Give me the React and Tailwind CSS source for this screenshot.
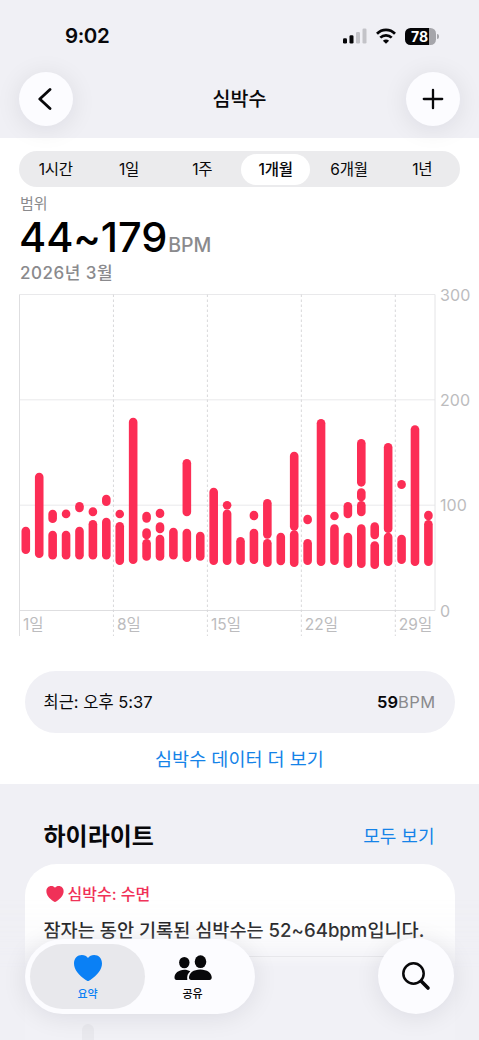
import { useState } from 'react';

const RANGES = ['1시간', '1일', '1주', '1개월', '6개월', '1년'];

// one entry per day, each segment is [low, high] in bpm
const DAYS = [
  [[53.6, 79.6]],
  [[49.8, 130.8]],
  [[83, 95.7], [48.3, 75.8]],
  [[87.5, 96], [48.3, 75.8]],
  [[93.2, 103], [48.3, 79.6]],
  [[89.4, 98], [48.3, 86]],
  [[99.2, 110], [48.3, 88]],
  [[87.5, 95.7], [43.2, 84]],
  [[44.1, 183]],
  [[83.4, 93.8], [67.6, 78], [47.3, 67.9]],
  [[87.8, 96.7], [73.3, 83.7], [47.3, 72]],
  [[48.3, 78.6]],
  [[89.4, 143.8], [46, 77.7]],
  [[47.3, 74.8]],
  [[43.2, 116.6]],
  [[96, 104], [43.2, 96]],
  [[43.2, 69.8]],
  [[85.6, 94.8], [44.1, 77.7]],
  [[68.2, 105.9], [41.3, 67.9]],
  [[42.9, 73.9]],
  [[75.8, 150.8], [41.3, 76.1]],
  [[81.8, 91], [43.2, 67.9]],
  [[42.2, 181.8]],
  [[85.6, 93.8], [43.2, 81.8]],
  [[87.5, 103], [40.3, 73.9]],
  [[117.6, 162.8], [103.6, 116], [89.4, 104], [40.3, 81.8]],
  [[67.6, 83.7], [39.4, 65.7]],
  [[73.6, 159], [42.2, 73.9]],
  [[115.3, 123.9], [44.1, 72]],
  [[42.2, 175.8]],
  [[85.6, 94.8], [42.2, 86]],
];

const LEFT = 19.5;
const RIGHT = 435;
const TOP = 14.5;
const BASE = 330.5;
const STEP = 13.42;
const BAR = 8.6;
const y = v => BASE - (v / 300) * (BASE - TOP);

function Chart() {
  return (
    <svg width="479" height="360" viewBox="0 0 479 360" className="block shrink-0">
      {[0, 100, 200, 300].map(v => (
        <g key={v}>
          <line x1={LEFT} x2={RIGHT} y1={y(v)} y2={y(v)} stroke={v === 0 ? '#dedee0' : '#e9e9eb'} />
          <text x="440" y={y(v) + 6} fontSize="16" letterSpacing="0.1" fill="#bcbcbe">{v}</text>
        </g>
      ))}
      <line x1={LEFT} x2={LEFT} y1={TOP} y2="356" stroke="#dedee0" />
      <line x1={RIGHT} x2={RIGHT} y1={TOP} y2={BASE} stroke="#e4e4e6" />
      {[1, 8, 15, 22, 29].map((d, i) => (
        <g key={d}>
          {i > 0 && (
            <line x1={LEFT + i * 93.95} x2={LEFT + i * 93.95} y1={TOP} y2="356" stroke="#d8d8da" strokeDasharray="2.5 2.5" />
          )}
          <text x={LEFT + i * 93.95 + 3.5} y="349.5" fontSize="15.5" fill="#bcbcbe">{d}일</text>
        </g>
      ))}
      {DAYS.map((segs, i) => segs.map(([lo, hi]) => (
        <rect
          key={`${i}-${lo}`}
          x={25.8 + i * STEP - BAR / 2}
          y={y(hi)}
          width={BAR}
          height={y(lo) - y(hi)}
          rx={BAR / 2}
          fill="#fc2d55"
        />
      )))}
    </svg>
  );
}

function Heart({ className }) {
  return (
    <svg viewBox="0 0 28 26" className={className} fill="currentColor">
      <path d="M14 26C13.300 26 12.300 25.300 11.400 24.700C5 20.300 0 14.800 0 8.500C0 3.400 3.400 0 7.900 0C10.500 0 12.700 1.100 14 2.900C15.300 1.100 17.500 0 20.100 0C24.600 0 28 3.400 28 8.500C28 14.800 23 20.300 16.600 24.700C15.700 25.300 14.700 26 14 26Z" />
    </svg>
  );
}

function StatusIcons() {
  return (
    <div className="flex items-center">
      <svg width="24" height="16" viewBox="0 0 24 16">
        <rect x="0" y="10.300" width="4" height="5.200" rx="1.300" fill="#050507" />
        <rect x="6.500" y="7.300" width="4" height="8.200" rx="1.300" fill="#050507" />
        <rect x="13" y="3.900" width="4" height="11.600" rx="1.300" fill="#c3c3c8" />
        <rect x="19.500" y="0.500" width="4" height="15" rx="1.300" fill="#c3c3c8" />
      </svg>
      <svg width="20" height="16" viewBox="0 0 20 16" className="ml-[9px]" fill="none" stroke="#050507" strokeWidth="2.700">
        <path d="M1 5.700C6 0.600 14 0.600 19 5.700" />
        <path d="M4.300 9.600C7.500 6.500 12.500 6.500 15.700 9.600" />
        <path d="M10 15.800L6.900 12.700C8.700 11.100 11.300 11.100 13.100 12.700Z" fill="#050507" stroke="none" />
      </svg>
      <div className="ml-[9px] flex h-[17px] w-[31px] items-center justify-center overflow-hidden rounded-[5.5px] bg-linear-to-r from-[#050507] from-78% to-[#a5a5aa] to-78%">
        <span className="pr-[2px] text-[14px] leading-[17px] font-bold text-white">78</span>
      </div>
      <div className="ml-px h-[5px] w-[2px] rounded-r-full bg-[#a5a5aa]" />
    </div>
  );
}

const glass = 'rounded-full bg-[#fcfcff] shadow-[0_3px_26px_rgba(0,0,30,0.090)]';

export default function App() {
  const [range, setRange] = useState('1개월');

  return (
    <div className="relative flex h-[1040px] w-[479px] flex-col overflow-hidden bg-white font-['Inter','Noto_Sans_CJK_KR',sans-serif] text-[#08080a]">
      <header className="relative h-[138px] shrink-0 bg-[#f0f0f5]">
        <div className="flex h-[72px] items-center justify-between pr-[40px] pl-[65px]">
          <span className="text-[20.500px] font-semibold tracking-[-0.400px]">9:02</span>
          <StatusIcons />
        </div>
        <div className="flex items-center justify-between px-[19px]">
          <button className={`flex size-[54px] items-center justify-center ${glass}`}>
            <svg width="14" height="24" viewBox="0 0 14 24" className="mr-[3px]" fill="none" stroke="currentColor" strokeWidth="2.800" strokeLinecap="round" strokeLinejoin="round">
              <path d="M12 2.500L1.800 12L12 21.500" />
            </svg>
          </button>
          <h1 className="pt-[2px] text-[19.500px] font-medium">심박수</h1>
          <button className={`flex size-[54px] items-center justify-center ${glass}`}>
            <svg width="22" height="22" viewBox="0 0 22 22" stroke="currentColor" strokeWidth="2.300" strokeLinecap="round">
              <path d="M11 1.800V20.200M1.800 11H20.200" />
            </svg>
          </button>
        </div>
      </header>

      {/* range picker */}
      <div className="mx-[19px] mt-[13px] flex h-9 shrink-0 items-center rounded-full bg-[#ebebed] pr-[1px]">
        {RANGES.map(r => (
          <button
            key={r}
            onClick={() => setRange(r)}
            className={`mx-[2.500px] h-[31px] flex-1 rounded-full pt-[2px] text-[15.500px] tracking-[-0.300px] ${r === range ? 'bg-white font-medium' : ''}`}
          >
            {r}
          </button>
        ))}
      </div>

      <section className="flex h-[93px] shrink-0 flex-col pl-[20px] text-[#8a8a8d]">
        <p className="mt-[4px] h-[21px] text-[15px] leading-[26px]">범위</p>
        <p className="flex h-[51px] items-baseline">
          <span className="ml-[-1px] text-[41.500px] leading-[50px] font-medium tracking-[-0.100px] text-black">44~179</span>
          <span className="ml-[1px] text-[19.500px] font-medium">BPM</span>
        </p>
        <p className="text-[17px] leading-[22px] font-medium tracking-[0.500px]">2026년 3월</p>
      </section>

      <Chart />

      <div className="mx-[24.500px] mt-[31px] flex h-[62px] shrink-0 items-center justify-between rounded-full bg-[#f0f0f5] px-[19px] text-[16.500px]">
        <span>최근: 오후 5:37</span>
        <span className="font-semibold">59<span className="font-normal tracking-[0.400px] text-[#8a8a8d]">BPM</span></span>
      </div>
      <a className="flex h-[51px] shrink-0 items-center justify-center pt-[2px] text-[18.500px] text-[#1583e8]">심박수 데이터 더 보기</a>

      <section className="flex-1 bg-[#f0f0f5] px-[24.500px]">
        <div className="flex h-[80px] items-center justify-between pr-[20px] pl-[19px] pt-[25px]">
          <h2 className="text-[24px] font-bold">하이라이트</h2>
          <a className="text-[18px] text-[#1583e8]">모두 보기</a>
        </div>
        <div className="h-[260px] rounded-[32px] bg-white px-[19px] pt-[17px]">
          <p className="flex h-[25px] items-center gap-[4px] text-[16px] font-medium text-[#f03158]">
            <Heart className="ml-[2px] h-[16px] w-[18px]" />
            <span className="pt-px">심박수: 수면</span>
          </p>
          <p className="mt-[9px] h-[28px] text-[18.600px] leading-[30px] font-medium whitespace-nowrap">잠자는 동안 기록된 심박수는 52~64bpm입니다.</p>
          <div className="mt-[13px] h-px bg-[#d5d5d9]" />
          <div className="mt-[67px] ml-[38px] h-[60px] w-[12px] rounded-full bg-[#a8a8ae]" />
        </div>
      </section>

      {/* content fades out under the tab bar */}
      <div className="pointer-events-none absolute inset-x-0 bottom-0 h-[150px] bg-[#f0f0f5]/90 mask-[linear-gradient(to_bottom,transparent_5%,rgba(0,0,0,0.22)_30%,black_52%)]" />

      <nav className="absolute inset-x-[25px] bottom-[26px] flex items-end justify-between">
        <div className={`flex h-[75px] w-[230px] items-center p-[5px] ${glass}`}>
          <button className="flex h-[65px] w-[115px] flex-col items-center rounded-full bg-[#e8e8ec] pt-[11px] text-[#0a80f5]">
            <Heart className="h-[26px] w-[28px]" />
            <span className="mt-[4px] text-[11px] leading-[18px] font-medium">요약</span>
          </button>
          <button className="flex h-[65px] flex-1 flex-col items-center pt-[11px] pr-[10px]">
            <svg width="38" height="26" viewBox="0 0 38 26" fill="currentColor">
              <ellipse cx="10.300" cy="7.600" rx="5.200" ry="5.700" />
              <path d="M0.500 22.600C0.500 18.500 4.500 14.800 10.300 14.800C12.600 14.800 14.700 15.400 16.300 16.300C13.900 18.300 12.700 21 13.300 25H2.500C1.200 25 0.500 24.100 0.500 22.600Z" />
              <ellipse cx="26.500" cy="6.700" rx="5.800" ry="6.400" />
              <path d="M15 22.600C15 18.200 19.500 14.600 26.300 14.600S37.700 18.200 37.700 22.600C37.700 24.200 36.900 25 35.500 25H17.200C15.800 25 15 24.200 15 22.600Z" />
            </svg>
            <span className="mt-[4px] text-[11px] leading-[18px] font-medium">공유</span>
          </button>
        </div>
        <button className={`flex size-[76px] items-center justify-center ${glass}`}>
          <svg width="30" height="30" viewBox="0 0 30 30" fill="none" stroke="currentColor" strokeLinecap="round">
            <circle cx="12.500" cy="12.500" r="10.200" strokeWidth="2.500" />
            <path d="M20.300 20.300L27 27" strokeWidth="3.600" />
          </svg>
        </button>
      </nav>
    </div>
  );
}
